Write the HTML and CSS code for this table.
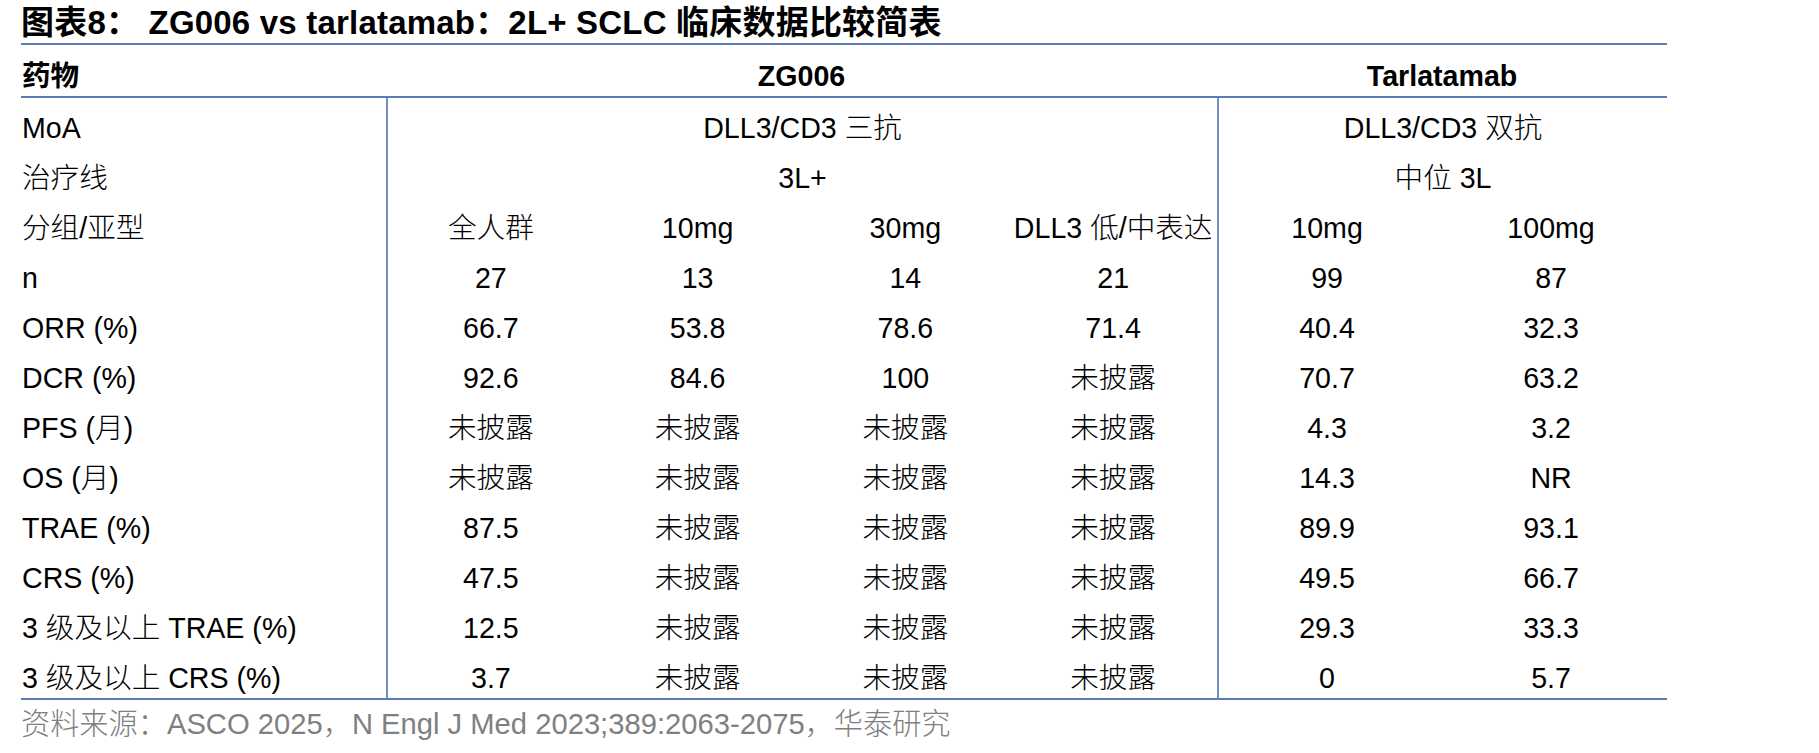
FILE: index.html
```html
<!DOCTYPE html>
<html lang="zh-CN">
<head>
<meta charset="utf-8">
<title>ZG006 vs tarlatamab</title>
<link rel="stylesheet" href="styles.css">
</head>
<body>
<div class="page">
  <h1 class="title">图表8： ZG006 vs tarlatamab：2L+ SCLC 临床数据比较简表</h1>
  <table class="grid">
    <colgroup>
      <col class="c-label">
      <col class="c-zg"><col class="c-zg"><col class="c-zg"><col class="c-zg">
      <col class="c-ta1"><col class="c-ta2">
    </colgroup>
    <thead>
      <tr>
        <th class="lbl">药物</th>
        <th colspan="4">ZG006</th>
        <th colspan="2">Tarlatamab</th>
      </tr>
    </thead>
    <tbody>
      <tr><td class="lbl">MoA</td><td class="sep" colspan="4">DLL3/CD3 三抗</td><td class="sep" colspan="2">DLL3/CD3 双抗</td></tr>
      <tr><td class="lbl">治疗线</td><td class="sep" colspan="4">3L+</td><td class="sep" colspan="2">中位 3L</td></tr>
      <tr><td class="lbl">分组/亚型</td><td class="sep">全人群</td><td>10mg</td><td>30mg</td><td>DLL3 低/中表达</td><td class="sep">10mg</td><td>100mg</td></tr>
      <tr><td class="lbl">n</td><td class="sep">27</td><td>13</td><td>14</td><td>21</td><td class="sep">99</td><td>87</td></tr>
      <tr><td class="lbl">ORR (%)</td><td class="sep">66.7</td><td>53.8</td><td>78.6</td><td>71.4</td><td class="sep">40.4</td><td>32.3</td></tr>
      <tr><td class="lbl">DCR (%)</td><td class="sep">92.6</td><td>84.6</td><td>100</td><td>未披露</td><td class="sep">70.7</td><td>63.2</td></tr>
      <tr><td class="lbl">PFS (月)</td><td class="sep">未披露</td><td>未披露</td><td>未披露</td><td>未披露</td><td class="sep">4.3</td><td>3.2</td></tr>
      <tr><td class="lbl">OS (月)</td><td class="sep">未披露</td><td>未披露</td><td>未披露</td><td>未披露</td><td class="sep">14.3</td><td>NR</td></tr>
      <tr><td class="lbl">TRAE (%)</td><td class="sep">87.5</td><td>未披露</td><td>未披露</td><td>未披露</td><td class="sep">89.9</td><td>93.1</td></tr>
      <tr><td class="lbl">CRS (%)</td><td class="sep">47.5</td><td>未披露</td><td>未披露</td><td>未披露</td><td class="sep">49.5</td><td>66.7</td></tr>
      <tr><td class="lbl">3 级及以上 TRAE (%)</td><td class="sep">12.5</td><td>未披露</td><td>未披露</td><td>未披露</td><td class="sep">29.3</td><td>33.3</td></tr>
      <tr class="last"><td class="lbl">3 级及以上 CRS (%)</td><td class="sep">3.7</td><td>未披露</td><td>未披露</td><td>未披露</td><td class="sep">0</td><td>5.7</td></tr>
    </tbody>
  </table>
  <p class="source">资料来源：ASCO 2025，N Engl J Med 2023;389:2063-2075，华泰研究</p>
</div>
</body>
</html>
```
FILE: styles.css
```css
html, body {
  margin: 0;
  padding: 0;
  background: #ffffff;
}

body {
  font-family: "Liberation Sans", "Noto Sans CJK SC", sans-serif;
  color: #000000;
}

.page {
  padding-left: 21px;
  width: 1646px;
}

.title {
  margin: 0;
  padding-top: 2px;
  font-size: 33px;
  line-height: 41px;
  font-weight: 700;
  letter-spacing: 0.2px;
  white-space: pre;
}

.grid {
  width: 1646px;
  table-layout: fixed;
  border-collapse: separate;
  border-spacing: 0;
  font-size: 28.6px;
}

.c-label { width: 365px; }
.c-zg { width: 207.75px; }
.c-ta1 { width: 218px; }
.c-ta2 { width: 232px; }

.grid th {
  font-weight: 700;
  text-align: center;
  padding: 11px 0 0 0;
  line-height: 40px;
  border-top: 2px solid #5a7db8;
  border-bottom: 2px solid #5a7db8;
  white-space: nowrap;
}

.grid td {
  font-weight: 300;
  text-align: center;
  padding: 10px 0 0 0;
  line-height: 40px;
  white-space: nowrap;
}

.grid .lbl {
  text-align: left;
  padding-left: 1px;
}

.grid td.sep {
  border-left: 2px solid #6f8fc6;
}

.grid tr.last td {
  border-bottom: 2px solid #5a7db8;
}

.source {
  margin: 0;
  font-size: 29.2px;
  line-height: 48px;
  color: #808080;
  font-weight: 300;
  white-space: nowrap;
}
```
